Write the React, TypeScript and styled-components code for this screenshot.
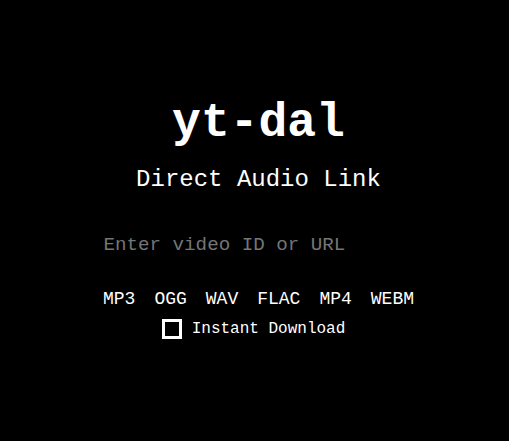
import { createGlobalStyle } from "styled-components";
import styled from "styled-components";

const formats = ["MP3", "OGG", "WAV", "FLAC", "MP4", "WEBM"];

const GlobalStyle = createGlobalStyle`
  html, body {
    margin: 0;
    padding: 0;
    background: #000;
    color: #fff;
    font-family: "Liberation Mono", "DejaVu Sans Mono", monospace;
  }
`;

const App = () => {
  return (
    <>
      <GlobalStyle />
      <Page>
        <Title>yt-dal</Title>
        <Subtitle>Direct Audio Link</Subtitle>
        <Input type="text" placeholder="Enter video ID or URL" />
        <Formats>
          {formats.map((f) => (
            <Format key={f}>{f}</Format>
          ))}
        </Formats>
        <Option>
          <Box type="checkbox" />
          <span>Instant Download</span>
        </Option>
      </Page>
    </>
  );
};

export default App;

// Styled ------------------------------------------------------------------------

const Page = styled.main`
  height: 441px;
  display: flex;
  flex-direction: column;
  align-items: center;
  justify-content: center;
  padding: 0 0 4px 8px;
  box-sizing: border-box;
`;

const Title = styled.h1`
  margin: 0;
  font-size: 48px;
  font-weight: 700;
  line-height: 1;
`;

const Subtitle = styled.h2`
  margin: 21px 0 0;
  font-size: 24px;
  font-weight: 400;
  line-height: 1;
`;

const Input = styled.input`
  margin-top: 42px;
  width: 310px;
  padding: 0;
  background: transparent;
  border: none;
  outline: none;
  color: #fff;
  font-family: inherit;
  font-size: 19.2px;
  line-height: 1;

  &::placeholder {
    color: #757575;
  }
`;

const Formats = styled.div`
  margin-top: 34px;
  display: flex;
  gap: 19px;
`;

const Format = styled.button`
  padding: 0;
  background: none;
  border: none;
  color: #fff;
  font-family: inherit;
  font-size: 18px;
  line-height: 1;
  cursor: pointer;
`;

const Option = styled.label`
  margin: 11px 10px 0 0;
  display: flex;
  align-items: center;
  gap: 10px;
  font-size: 16px;
`;

const Box = styled.input`
  appearance: none;
  margin: 0;
  width: 20px;
  height: 20px;
  border: 3px solid #fff;
  background: transparent;
  box-sizing: border-box;
`;
